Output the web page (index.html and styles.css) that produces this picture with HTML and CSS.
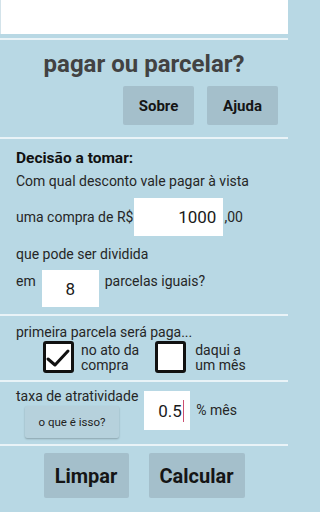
FILE: index.html
```html
<!DOCTYPE html>
<html lang="pt">
<head>
<meta charset="utf-8">
<title>pagar ou parcelar?</title>
<link rel="stylesheet" href="styles.css">
</head>
<body>
<div class="app">
  <div class="topbox"></div>
  <div class="rule rule-top"></div>

  <h1 class="title">pagar ou parcelar?</h1>
  <div class="menu">
    <button class="btn btn-menu">Sobre</button>
    <button class="btn btn-menu">Ajuda</button>
  </div>
  <div class="rule rule-menu"></div>

  <section class="sec sec-decisao">
    <div class="heading">Decisão a tomar:</div>
    <div class="line line-com">Com qual desconto vale pagar à vista</div>
    <div class="row row-valor">
      <span class="lbl">uma compra de R$</span>
      <div class="field field-valor">1000</div>
      <span class="lbl lbl-cents">,00</span>
    </div>
    <div class="line line-div">que pode ser dividida</div>
    <div class="row row-parc">
      <span class="lbl lbl-top">em</span>
      <div class="field field-parc">8</div>
      <span class="lbl lbl-top">parcelas iguais?</span>
    </div>
  </section>
  <div class="rule rule-sec1"></div>

  <section class="sec sec-primeira">
    <div class="line line-prim">primeira parcela será paga...</div>
    <div class="checks">
      <div class="check-item check-ato">
        <div class="box">
          <svg class="tick" viewBox="0 0 31 32" width="31" height="32"><polyline points="5,18 12,24 25,10" fill="none" stroke="#111" stroke-width="3" stroke-linecap="round" stroke-linejoin="round"/></svg>
        </div>
        <div class="check-text">no ato da<br>compra</div>
      </div>
      <div class="check-item check-mes">
        <div class="box"></div>
        <div class="check-text">daqui a<br>um mês</div>
      </div>
    </div>
  </section>
  <div class="rule rule-sec2"></div>

  <section class="sec sec-taxa">
    <div class="taxa-left">
      <div class="line line-taxa">taxa de atratividade</div>
      <button class="btn btn-info">o que é isso?</button>
    </div>
    <div class="taxa-right">
      <div class="field field-taxa">0.5<span class="cursor"></span></div>
      <span class="lbl">% mês</span>
    </div>
  </section>
  <div class="rule rule-sec3"></div>

  <div class="actions">
    <button class="btn btn-action btn-limpar">Limpar</button>
    <button class="btn btn-action btn-calc">Calcular</button>
  </div>
</div>
</body>
</html>
```

FILE: styles.css
```css
* { box-sizing: border-box; }
html, body { margin: 0; padding: 0; background: #b8d8e4; }
body {
  font-family: Roboto, "Liberation Sans", sans-serif;
  color: #2a2a2a;
  width: 288px;
  height: 512px;
  overflow: hidden;
}
.app { display: flex; flex-direction: column; }

.topbox {
  height: 34px;
  background: #ffffff;
  border-left: 1px solid #d3e3ea;
}
.rule {
  height: 2px;
  background: #e9f3f7;
}
.rule-top { margin-top: 4px; }

.title {
  margin: 10px 0 0 0;
  font-size: 24px;
  line-height: 28px;
  font-weight: 700;
  color: #424242;
  text-align: center;
}

.btn {
  font-family: Roboto, "Liberation Sans", sans-serif;
  border: none;
  border-radius: 2px;
  background: #a4bfcb;
  color: #151515;
  font-weight: 700;
  padding: 0;
}

.menu {
  display: flex;
  justify-content: flex-end;
  gap: 13px;
  padding-right: 10px;
  margin-top: 8px;
}
.btn-menu {
  width: 71px;
  height: 39px;
  font-size: 15px;
}
.rule-menu { margin-top: 12px; }

.sec { padding-left: 16px; }
.lbl, .line { font-size: 14px; line-height: 17px; color: #262626; }

.heading {
  margin-top: 10px;
  font-size: 15.5px;
  line-height: 18px;
  font-weight: 700;
  color: #111;
}
.line-com { margin-top: 6px; }

.row { display: flex; align-items: center; }
.row-valor { margin-top: 8px; height: 38px; }
.field {
  background: #fff;
  font-size: 17px;
  color: #1a1a1a;
  display: flex;
  align-items: center;
}
.field-valor {
  width: 89px;
  height: 38px;
  margin-left: 1px;
  justify-content: flex-end;
  padding-right: 7px;
}
.lbl-cents { margin-left: 1px; }

.line-div { margin-top: 10px; }
.row-parc { margin-top: 7px; align-items: flex-start; }
.lbl-top { margin-top: 3px; }
.field-parc {
  width: 57px;
  height: 37px;
  margin: 0 6px 0 6px;
  justify-content: center;
}

.rule-sec1 { margin-top: 7px; }

.line-prim { margin-top: 8px; }
.checks {
  display: flex;
  margin-top: 0;
  padding-left: 27px;
}
.check-item { display: flex; align-items: center; }
.check-mes { margin-left: 16px; }
.box {
  width: 31px;
  height: 32px;
  border: 3px solid #111;
  border-radius: 3px;
  background: #fff;
  position: relative;
}
.tick { position: absolute; left: -3px; top: -3px; }
.check-text {
  margin-left: 7px;
  font-size: 14px;
  line-height: 15px;
  color: #262626;
  padding-top: 1px;
}
.check-mes .check-text { margin-left: 9px; }

.rule-sec2 { margin-top: 7px; }

.sec-taxa { display: flex; }
.taxa-left { display: flex; flex-direction: column; align-items: flex-start; }
.line-taxa { margin-top: 6px; }
.btn-info {
  margin-top: 1px;
  margin-left: 9px;
  width: 94px;
  height: 32px;
  font-size: 11.5px;
  font-weight: 400;
  color: #222;
  background: #b6d1dc;
  box-shadow: 0 1px 2px rgba(0,0,0,0.25);
}
.taxa-right {
  display: flex;
  align-items: center;
  margin-top: 9px;
  margin-left: 6px;
  height: 39px;
}
.field-taxa {
  width: 46px;
  height: 39px;
  justify-content: flex-end;
  padding-right: 6px;
  font-size: 17px;
  position: relative;
}
.cursor {
  display: inline-block;
  width: 1.5px;
  height: 22px;
  background: #cc4f72;
  margin-left: 1px;
}
.taxa-right .lbl { margin-left: 6px; }

.rule-sec3 { margin-top: 6px; }

.actions {
  display: flex;
  justify-content: center;
  gap: 20px;
  margin-top: 7px;
}
.btn-action {
  height: 45px;
  font-size: 20px;
}
.btn-limpar { width: 85px; }
.btn-calc { width: 96px; }
```
